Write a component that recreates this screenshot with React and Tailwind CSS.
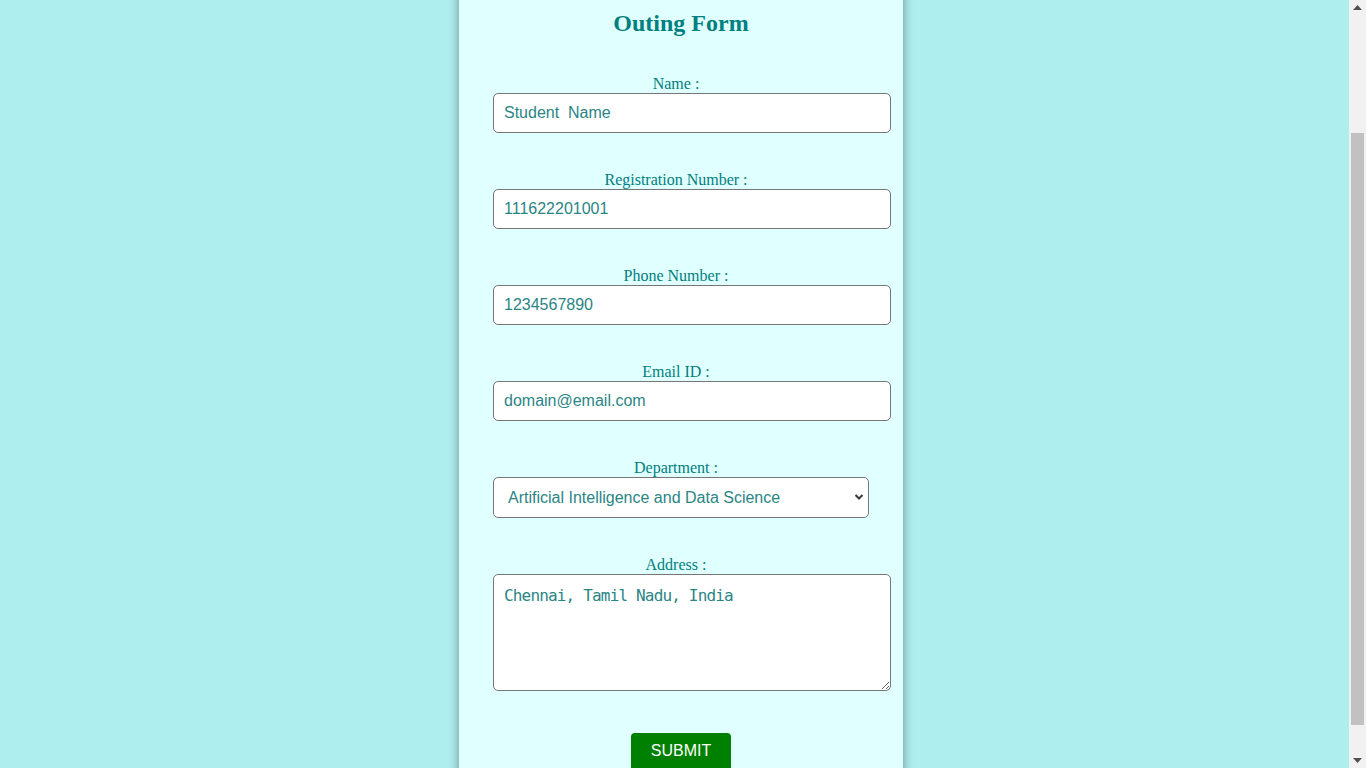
import React, { useEffect } from "react";

const fields = [
  { label: "Name :", value: "Student  Name" },
  { label: "Registration Number :", value: "111622201001" },
  { label: "Phone Number :", value: "1234567890" },
  { label: "Email ID :", value: "domain@email.com" },
];

// classic chrome scrollbar look, the headless one is overlay-only
function FakeScrollbar() {
  return (
    <div className="fixed top-0 right-0 w-[17px] h-screen bg-[#f1f1f1] flex flex-col items-center">
      <svg className="mt-[5px]" width="9" height="5" viewBox="0 0 9 5">
        <path d="M0 5 L4.5 0 L9 5 Z" fill="#505050" />
      </svg>
      <div className="mt-[123px] w-[13px] h-[592px] bg-[#c1c1c1]" />
      <svg className="mt-auto mb-[5px]" width="9" height="5" viewBox="0 0 9 5">
        <path d="M0 0 L4.5 5 L9 0 Z" fill="#505050" />
      </svg>
    </div>
  );
}

function App() {
  // the reference was taken a bit scrolled down
  useEffect(() => {
    window.scrollTo(0, 150);
  }, []);

  return (
    <div className="min-h-screen bg-[#afeeee] pt-[40px] pb-[13px] font-['Liberation_Serif',serif]">
      <div className="ml-[459px] w-[444px] bg-[#e0ffff] shadow-[0_0_10px_rgba(0,0,0,0.4)] pt-[119px] pb-[20px]">
        <h2 className="text-center text-[24px] leading-[28px] font-bold text-[#008080]">
          Outing Form
        </h2>

        <form className="mt-[38px]" onSubmit={(e) => e.preventDefault()}>
          <div className="pl-[34px]">
            <div className="w-[366px]">
              {fields.map((f) => (
                <div key={f.label} className="mb-[38px]">
                  <label className="block text-center text-[16px] leading-[18px] text-[#008080]">
                    {f.label}
                  </label>
                  <input
                    type="text"
                    defaultValue={f.value}
                    className="block w-[398px] h-[40px] px-[10px] bg-white border border-[#767676] rounded-[5px] text-[16px] text-[#2a8585] font-['Liberation_Sans',Arial,sans-serif] whitespace-pre outline-none"
                  />
                </div>
              ))}

              <div className="mb-[38px]">
                <label className="block text-center text-[16px] leading-[18px] text-[#008080]">
                  Department :
                </label>
                <div className="relative w-[376px]">
                  <select
                    defaultValue="ai"
                    className="block w-[376px] h-[41px] pl-[14px] pr-[30px] appearance-none bg-white border border-[#767676] rounded-[5px] text-[16px] text-[#2a8585] font-['Liberation_Sans',Arial,sans-serif] outline-none"
                  >
                    <option value="ai">Artificial Intelligence and Data Science</option>
                    <option value="cse">Computer Science and Engineering</option>
                    <option value="ece">Electronics and Communication Engineering</option>
                  </select>
                  <svg
                    className="absolute right-[5px] top-[15px] pointer-events-none"
                    width="10"
                    height="10"
                    viewBox="0 0 10 10"
                  >
                    <path d="M1.5 3 L5 6.5 L8.5 3" fill="none" stroke="#3a3a3a" strokeWidth="2" />
                  </svg>
                </div>
              </div>

              <div className="mb-[42px]">
                <label className="block text-center text-[16px] leading-[18px] text-[#008080]">
                  Address :
                </label>
                <textarea
                  defaultValue="Chennai, Tamil Nadu, India"
                  className="block w-[398px] h-[117px] px-[10px] pt-[11px] bg-white border border-[#767676] rounded-[5px] text-[16px] leading-[20px] tracking-[-0.83px] text-[#2a8585] font-['DejaVu_Sans_Mono',monospace] outline-none"
                />
              </div>
            </div>
          </div>

          <div className="flex justify-center">
            <button
              type="submit"
              className="w-[100px] h-[38px] pb-[2px] bg-[#008000] text-white rounded-[4px] text-[16px] font-['Liberation_Sans',Arial,sans-serif]"
            >
              SUBMIT
            </button>
          </div>
        </form>
      </div>
      <FakeScrollbar />
    </div>
  );
}

export default App;
